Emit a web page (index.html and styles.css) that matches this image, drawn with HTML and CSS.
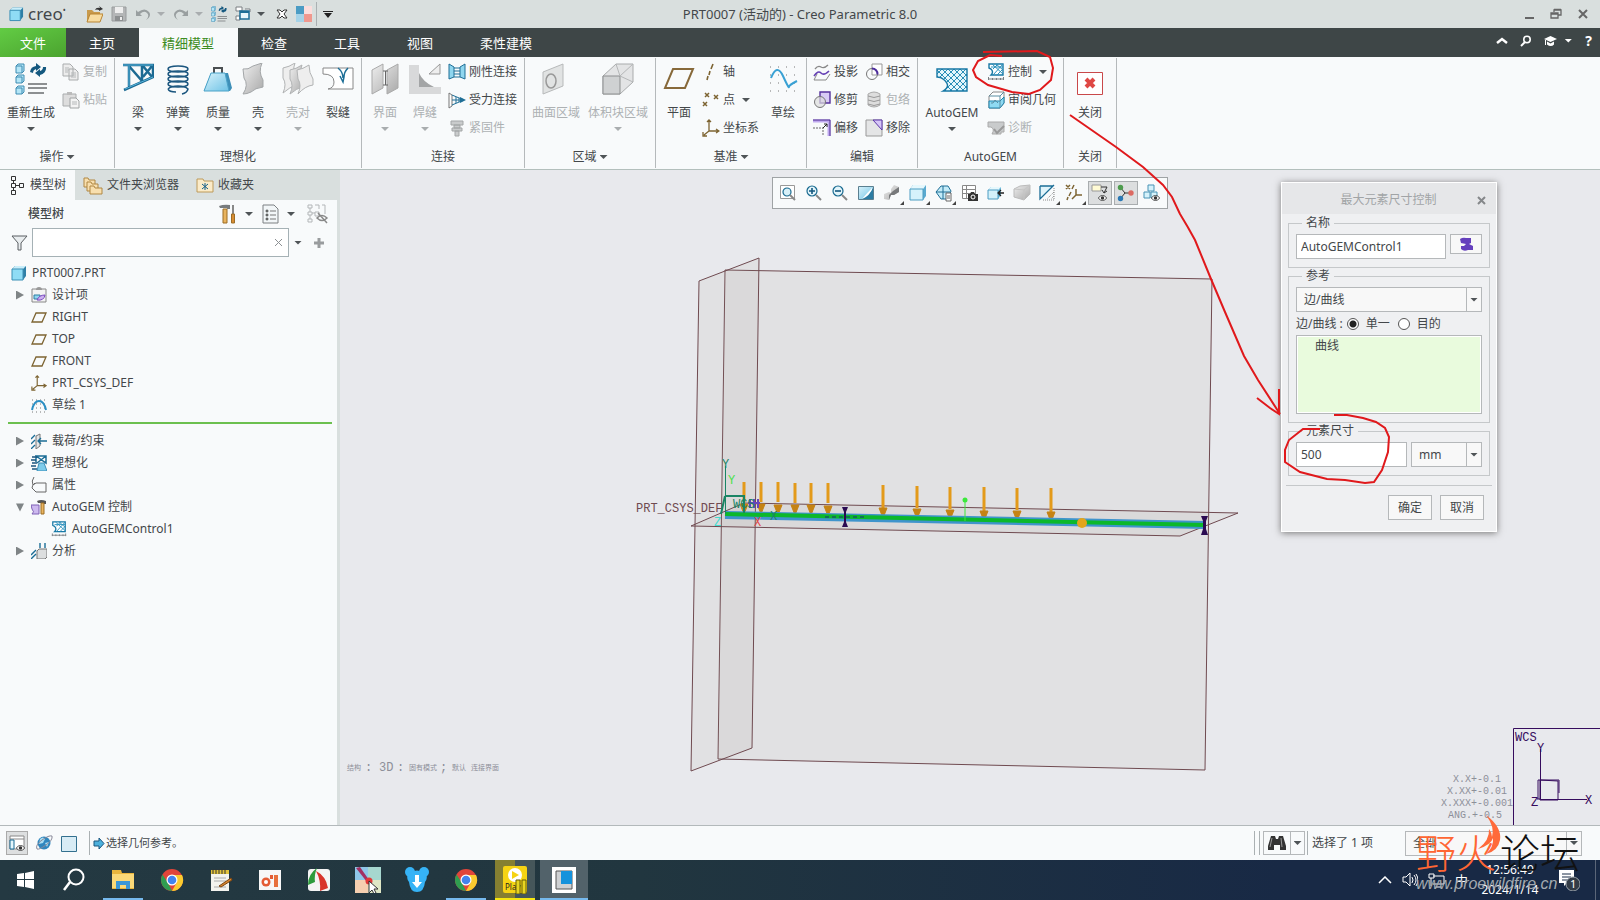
FILE: index.html
```
<!DOCTYPE html>
<html lang="zh-CN">
<head>
  <meta charset="UTF-8">
  <title>PRT0007 (活动的) - Creo Parametric 8.0</title>
  <link rel="stylesheet" href="styles.css">
</head>
<body>

<!-- shared icons -->
<svg class="sprite" aria-hidden="true">
  <defs>
    <linearGradient id="sky" x1="0" y1="0" x2="1" y2="1">
      <stop offset="0" stop-color="#d8f2fb"/><stop offset="1" stop-color="#6fc3e6"/>
    </linearGradient>
    <linearGradient id="metal" x1="0" y1="0" x2="1" y2="1">
      <stop offset="0" stop-color="#eeeeee"/><stop offset="1" stop-color="#a9a9a9"/>
    </linearGradient>
  </defs>
  <symbol id="i-cube" viewBox="0 0 16 16">
    <path d="M1 4l3-3h11v10l-3 4H1z" fill="#2f7fa6"/>
    <path d="M1 4l3-3h11l-3 3z" fill="#c9eefa"/>
    <path d="M1 4h11v11H1z" fill="#8fdcf5" stroke="#3b8fb5"/>
  </symbol>
  <symbol id="i-plane" viewBox="0 0 16 16">
    <path d="M5 4h10l-4 9H1z" fill="none" stroke="#7d6432" stroke-width="1.3"/>
  </symbol>
  <symbol id="i-csys" viewBox="0 0 18 18">
    <path d="M7 2v10h9M7 12l-5 4M5 3l2-2 2 2M14 10l3 2-3 2M1 13v4h4" fill="none" stroke="#7d6432" stroke-width="1.3"/>
  </symbol>
  <symbol id="i-regen" viewBox="0 0 32 32">
    <g fill="#b5e6f7" stroke="#3f8cb2"><path d="M1 3l2-2h6v7l-2 2H1zM1 14l2-2h6v6l-2 2H1zM1 25l2-2h6v6l-2 2H1z"/><path d="M1 3h6v7M1 14h6v6M1 25h6v6" fill="none"/></g>
    <path d="M15 9a7 7 0 0 1 6-6V0l5 4-5 4V6q-3 1-3 4zM31 4a7 7 0 0 1-6 8v2l-5-4 5-4v2q3-1 3-4z" fill="#14587f"/>
    <path d="M13 21h19M13 25h19M13 30h16" stroke="#8c8f91" stroke-width="2"/>
  </symbol>
  <symbol id="i-mesh" viewBox="0 0 18 18">
    <path d="M2 1h14v11H4q3-3 0-6l-2-1z" fill="#fff" stroke="#1778a5" stroke-width="1.4"/>
    <path d="M5 1l11 10M9 1l7 6M16 1L6 12M11 1L6 6M16 6l-6 6M4 4h12" stroke="#2b91bd" fill="none"/>
    <path d="M1 16h16M1.500 14v3M5.500 15v2M9.500 15v2M13.500 15v2M16.500 14v3" stroke="#7b7f82" fill="none"/>
  </symbol>
  <symbol id="i-chrome" viewBox="0 0 24 24">
    <circle cx="12" cy="12" r="11" fill="#e1453a"/>
    <path d="M2.500 6.500L8 15l4 8A11 11 0 0 1 2.500 6.500z" fill="#2f9e50"/>
    <path d="M12 7h10a11 11 0 0 1-10 16l5-9z" fill="#fbcb2f"/>
    <circle cx="12" cy="12" r="5.500" fill="#fff"/><circle cx="12" cy="12" r="4.300" fill="#4384ee"/>
  </symbol>
  <symbol id="i-eye" viewBox="0 0 10 7">
    <path d="M0 3.500q5-6 10 0-5 6-10 0z" fill="#fff" stroke="#333"/><circle cx="5" cy="3.500" r="2" fill="#333"/>
  </symbol>
</svg>

<header class="titlebar">
  <div class="quick">
    <svg class="q-cube" width="15" height="16"><use href="#i-cube"/></svg>
    <span class="brand">creo<sup>•</sup></span>
    <button title="打开"><svg width="17" height="17" viewBox="0 0 17 17"><path d="M1 15V4h5l2 2h6v9z" fill="#c89a4c"/><path d="M4 8h13l-3 8H1z" fill="#f8dca0" stroke="#b98532"/><path d="M9 4q1-3 5-2l-1-2 4 3-4 2v-1q-2-1-4 0z" fill="#333"/></svg></button>
    <button title="保存"><svg width="16" height="16" viewBox="0 0 16 16"><path d="M1 1h14v14H1z" fill="#b4b6b7" stroke="#999c9d"/><path d="M4 1h8v6H4z" fill="#eee"/><path d="M4 10h8v5H4z" fill="#8c8f90"/><path d="M9 11h2v3H9z" fill="#eee"/></svg></button>
    <button title="撤消"><svg width="16" height="14" viewBox="0 0 16 14"><path d="M1 3v6h6L5 7q4-4 7-1t-1 7q6-4 3-8-4-5-11 0z" fill="#999fa0"/></svg><i class="caret dim"></i></button>
    <button title="重做"><svg width="16" height="14" viewBox="0 0 16 14"><path d="M15 3v6H9l2-2Q7 3 4 6t1 7Q-1 9 2 5q4-5 11 0z" fill="#999fa0"/></svg><i class="caret dim"></i></button>
    <button title="重新生成"><svg width="16" height="16"><use href="#i-regen"/></svg></button>
    <button title="窗口"><svg width="16" height="16" viewBox="0 0 16 16"><path d="M1 1h6v4H1zM10 3h5v3M1 10h4v4H1z" fill="#fff" stroke="#7b7f82"/><path d="M5 5h9v8H5z" fill="#e6f6fc" stroke="#1b6d96" stroke-width="1.500"/><path d="M5 6h9" stroke="#1b6d96" stroke-width="2"/></svg><i class="caret"></i></button>
    <button title="关闭" class="close-window"><svg width="12" height="10" viewBox="0 0 12 10"><path d="M1 1h3l2 2 2-2h3L8 5l3 4H8L6 7 4 9H1l3-4z" fill="#fff" stroke="#333"/></svg></button>
    <button title="外观"><svg width="16" height="16" viewBox="0 0 16 16"><path d="M0 0h8v8H0z" fill="#4b9cc4"/><path d="M8 0h8v8H8z" fill="#fbdedd"/><path d="M0 8h8v8H0z" fill="#a5d3e8"/><path d="M8 8h8v8H8z" fill="#f0988e"/></svg></button>
    <span class="bar"></span>
    <button title="自定义"><svg width="10" height="7" viewBox="0 0 10 7"><path d="M0 0h10v1H0zM1 2h8L5 7z" fill="#222"/></svg></button>
  </div>
  <h1>PRT0007 (活动的) - Creo Parametric 8.0</h1>
  <div class="window-buttons">
    <button title="最小化"><svg width="12" height="12" viewBox="0 0 12 12"><path d="M2 9h9v2H2z" fill="#666"/></svg></button>
    <button title="还原"><svg width="12" height="12" viewBox="0 0 12 12"><path d="M4 4V2h7v5H8M4 1.500h7" fill="none" stroke="#666" stroke-width="1.300"/><path d="M1 5h7v5H1zM1 6h7" fill="none" stroke="#666" stroke-width="1.300"/></svg></button>
    <button title="关闭"><svg width="12" height="12" viewBox="0 0 12 12"><path d="M2 2l8 8M10 2l-8 8" stroke="#666" stroke-width="2"/></svg></button>
  </div>
</header>

<nav class="tabs">
  <button class="tab file">文件</button>
  <button class="tab">主页</button>
  <button class="tab active">精细模型</button>
  <button class="tab">检查</button>
  <button class="tab">工具</button>
  <button class="tab">视图</button>
  <button class="tab">柔性建模</button>
  <div class="tab-help">
    <svg width="12" height="8" viewBox="0 0 12 8"><path d="M1 6l5-4 5 4" fill="none" stroke="#fff" stroke-width="2.500"/></svg>
    <svg width="12" height="12" viewBox="0 0 12 12"><circle cx="7" cy="4.500" r="3.200" fill="none" stroke="#fff" stroke-width="1.600"/><path d="M5 7l-4 4" stroke="#fff" stroke-width="2"/></svg>
    <svg width="13" height="10" viewBox="0 0 13 10"><path d="M0 3l6.500-3L13 3 6.500 6z" fill="#fff"/><path d="M3 5.500v3q4 3 7 0v-3L6.500 7.500zM1 4h1v5H1z" fill="#fff"/></svg>
    <i class="caret white"></i>
    <b>?</b>
  </div>
</nav>

<section class="ribbon">
  <div class="group g-ops">
    <div class="tools">
      <button class="big wide"><svg width="32" height="32"><use href="#i-regen"/></svg><span>重新生成</span><i class="caret"></i></button>
      <div class="col">
        <button class="small" disabled><svg viewBox="0 0 18 18"><path d="M1 1h7l3 3v9H1zM7 6h6l3 3v8H7z" fill="#ececec" stroke="#a9acad"/><path d="M3 5h4M3 7h4M3 9h3M9 10h5M9 12h5M9 14h5" stroke="#b5b8b9"/></svg>复制</button>
        <button class="small" disabled><svg viewBox="0 0 18 18"><path d="M1 3h13v12H1z" fill="#ddd" stroke="#a9acad"/><path d="M5 1h5v3H5z" fill="#bbb"/><path d="M8 7h6l3 3v7H8z" fill="#f3f3f3" stroke="#a0a3a4"/><path d="M10 11h5M10 13h5" stroke="#b5b8b9"/></svg>粘贴</button>
      </div>
    </div>
    <div class="group-name">操作<i class="caret"></i></div>
  </div>

  <div class="group g-ideal">
    <div class="tools">
      <button class="big"><svg width="32" height="32" viewBox="0 0 32 32"><path d="M1 2h30v12L2 27M7 2v22M7 3l13 15M20 2v17M21 14l9-11M21 3l9 11" fill="none" stroke="#1c6a93" stroke-width="2.500"/><path d="M1 2h30M7 3v20M31 14L3 26" stroke="#59b5dc"/></svg><span>梁</span><i class="caret"></i></button>
      <button class="big"><svg width="32" height="32" viewBox="0 0 32 32"><g fill="none" stroke="#1b567f" stroke-width="1.500"><ellipse cx="16" cy="6" rx="10" ry="3"/><ellipse cx="16" cy="11" rx="10" ry="3"/><ellipse cx="16" cy="16" rx="10" ry="3"/><ellipse cx="16" cy="21" rx="10" ry="3"/><path d="M6 26q3-3 10-3t10 3q-1 4-6 5M6 26q1 3 8 3"/></g></svg><span>弹簧</span><i class="caret"></i></button>
      <button class="big"><svg width="32" height="32" viewBox="0 0 32 32"><path d="M12 10V5h8v5" fill="none" stroke="#4b4f52" stroke-width="2"/><path d="M9 10h17l4 15-2 3H2z" fill="#3d8fb8"/><path d="M9 10h14l4 18H2z" fill="url(#sky)" stroke="#4ba2c8"/></svg><span>质量</span><i class="caret"></i></button>
      <button class="big"><svg width="32" height="32" viewBox="0 0 32 32"><path d="M1 6q5 1 10-3l9-3q-4 9 1 17v7q-8 1-12 5-4 2-8 2 6-9 1-16z" fill="url(#metal)" stroke="#a3a6a8"/></svg><span>壳</span><i class="caret"></i></button>
      <button class="big" disabled><svg width="32" height="32" viewBox="0 0 32 32"><g fill="url(#metal)" stroke="#b1b3b4"><path d="M1 5q6-1 12-5-3 8 1 14v8q-6 2-13 8 4-9 0-15z" fill="#eee"/><path d="M8 7q6-1 12-5-3 8 1 14v8q-6 1-13 7 4-9 0-15z"/><path d="M15 7q6-1 12-5 0 8 4 14v6q-8 1-15 9 4-9 0-15z" fill="#eee"/></g></svg><span>壳对</span><i class="caret"></i></button>
      <button class="big"><svg width="32" height="32" viewBox="0 0 32 32"><path d="M1 11V5h30v21H6q6-1 6-7 0-8-11-8z" fill="#fff" stroke="#888"/><path d="M16 5q5 4 5 10M26 5q-4 4-4 9l-1 5-3-6" fill="none" stroke="#1b6d96" stroke-width="1.500"/></svg><span>裂缝</span></button>
    </div>
    <div class="group-name">理想化</div>
  </div>

  <div class="group g-conn">
    <div class="tools">
      <button class="big" disabled><svg width="32" height="32" viewBox="0 0 32 32"><path d="M3 7l11-6v24L3 31zM18 7l11-6v24l-11 6z" fill="url(#metal)" stroke="#aaa"/><path d="M14 8h5M16.500 8v14M14 22h5" stroke="#666"/></svg><span>界面</span><i class="caret"></i></button>
      <button class="big" disabled><svg width="32" height="32" viewBox="0 0 32 32"><path d="M0 2h10v22h22v7H0z" fill="#d8d9da"/><path d="M10 10q4 9 15 14H10z" fill="#a3a5a6"/><path d="M20 11L31 1v10z" fill="#eee" stroke="#999"/></svg><span>焊缝</span><i class="caret"></i></button>
      <div class="col">
        <button class="small"><svg viewBox="0 0 18 18"><path d="M1 1l5 3v10l-5 2zM17 1l-5 3v10l5 2z" fill="#8fd6ef" stroke="#1f6e96"/><path d="M6 5h6M6 8h6M6 11h6M6 14h6" stroke="#1f6e96"/></svg>刚性连接</button>
        <button class="small"><svg viewBox="0 0 18 18"><path d="M1 2v15l3-2V4z" fill="#fff" stroke="#777"/><path d="M4 4l12 5M4 14l12-5M4 9h12M8 6v6M11 7v4" fill="none" stroke="#1f6e96"/><path d="M12 6l6 3-6 3z" fill="#1f6e96"/></svg>受力连接</button>
        <button class="small" disabled><svg viewBox="0 0 18 18"><path d="M3 2h12v4H3zM6 6h6v3H6zM4 9h10v3H4zM7 12h4v5H7z" fill="#c9cbcc" stroke="#a3a6a7"/></svg>紧固件</button>
      </div>
    </div>
    <div class="group-name">连接</div>
  </div>

  <div class="group g-region">
    <div class="tools">
      <button class="big wide" disabled><svg width="32" height="32" viewBox="0 0 32 32"><path d="M3 9l20-8v22L3 31z" fill="#e1e3e3" stroke="#b7b9ba"/><ellipse cx="11" cy="18" rx="5" ry="7" fill="none" stroke="#999" stroke-width="1.500"/></svg><span>曲面区域</span></button>
      <button class="big wide" disabled><svg width="32" height="32" viewBox="0 0 32 32"><path d="M1 13L14 1h17v18L18 31H1z" fill="#e3e4e5" stroke="#a9abac"/><path d="M1 13h17v18H1z" fill="#cfd1d2" stroke="#8d8f90"/><path d="M18 13L31 1M14 1l4 12 13 6" stroke="#b5b7b8" fill="none"/></svg><span>体积块区域</span><i class="caret"></i></button>
    </div>
    <div class="group-name">区域<i class="caret"></i></div>
  </div>

  <div class="group g-datum">
    <div class="tools">
      <button class="big"><svg width="32" height="32" viewBox="0 0 32 32"><path d="M10 6h20l-8 19H2z" fill="none" stroke="#87693a" stroke-width="2"/></svg><span>平面</span></button>
      <div class="col">
        <button class="small"><svg viewBox="0 0 18 18"><path d="M11 1L9 6M8 8l-1 4M6 13l-1 4" stroke="#7d6432" stroke-width="1.600"/></svg>轴</button>
        <button class="small"><svg viewBox="0 0 18 18"><path d="M3 2l4 4M7 2L3 6M12 4l4 4M16 4l-4 4M1 11l4 4M5 11l-4 4" stroke="#7d6432" stroke-width="1.500"/></svg>点<i class="caret"></i></button>
        <button class="small"><svg viewBox="0 0 18 18"><use href="#i-csys"/></svg>坐标系</button>
      </div>
      <button class="big"><svg width="32" height="32" viewBox="0 0 32 32"><path d="M3 4h26M3 12h26M3 20h26M3 28h26" stroke="#777" stroke-dasharray="1 7"/><path d="M4 15q6-15 12-2t6 11 8-6" fill="none" stroke="#39a1d4" stroke-width="2"/></svg><span>草绘</span></button>
    </div>
    <div class="group-name">基准<i class="caret"></i></div>
  </div>

  <div class="group g-edit">
    <div class="tools">
      <div class="col">
        <button class="small"><svg viewBox="0 0 18 18"><path d="M2 6q3-4 6-2t7-2" fill="none" stroke="#888" stroke-width="1.300"/><path d="M4 11l-3 6h12l4-6" fill="none" stroke="#888"/><path d="M1 13q4-6 7-3t8-2" fill="none" stroke="#6541b5" stroke-width="1.600"/></svg>投影</button>
        <button class="small"><svg viewBox="0 0 18 18"><path d="M7 1h10v11H7z" fill="#d9ccf5" stroke="#55319c" stroke-width="1.400"/><circle cx="7" cy="11" r="5.500" fill="#ddd" fill-opacity=".7" stroke="#777"/></svg>修剪</button>
        <button class="small"><svg viewBox="0 0 18 18"><path d="M0 2h16v15" fill="none" stroke="#c0a9ef" stroke-width="3"/><path d="M0 1h17v16" fill="none" stroke="#4a288f"/><path d="M0 9h10v8" fill="none" stroke="#666" stroke-dasharray="2 1"/><path d="M10 9l4-4M11 5h3v3" fill="none" stroke="#222"/></svg>偏移</button>
      </div>
      <div class="col">
        <button class="small"><svg viewBox="0 0 18 18"><path d="M7 1h10v11H7z" fill="#fff" stroke="#999"/><circle cx="7" cy="11" r="5.500" fill="none" stroke="#777"/><path d="M7 5.500a5.500 5.500 0 0 1 5.500 6" fill="none" stroke="#4d2d9c" stroke-width="2"/></svg>相交</button>
        <button class="small" disabled><svg viewBox="0 0 18 18"><path d="M3 3q6-4 12 0v11q-6 4-12 0z" fill="#ddd" stroke="#aaa"/><path d="M3 5q6 3 12 0M3 9q6 3 12 0M3 13q6 3 12 0" fill="none" stroke="#999"/></svg>包络</button>
        <button class="small"><svg viewBox="0 0 18 18"><path d="M1 1h16v16H1z" fill="#e4e5e6" stroke="#999"/><path d="M8 1h9v10z" fill="#d6c6f7" stroke="#5b35a8"/></svg>移除</button>
      </div>
    </div>
    <div class="group-name">编辑</div>
  </div>

  <div class="group g-gem">
    <div class="tools">
      <button class="big wide"><svg width="32" height="32" viewBox="0 0 32 32"><defs><pattern id="hex" width="6" height="6" patternUnits="userSpaceOnUse"><path d="M0 0l6 6M6 0L0 6" stroke="#2b8fb8"/></pattern></defs><path d="M1 6h30v22H7q9-5 0-12-2-2-6-2z" fill="#e5f6fc"/><path d="M1 6h30v22H7q9-5 0-12-2-2-6-2z" fill="url(#hex)" stroke="#1778a5" stroke-width="1.400"/></svg><span>AutoGEM</span><i class="caret"></i></button>
      <div class="col">
        <button class="small"><svg viewBox="0 0 18 18"><use href="#i-mesh"/></svg>控制<i class="caret"></i></button>
        <button class="small"><svg viewBox="0 0 18 18"><path d="M2 5l4-4h11v11l-4 5H2z" fill="#fff" stroke="#888"/><path d="M2 10h11l4-4v6l-4 5H2z" fill="#8fdaf2" stroke="#1f83ad"/><path d="M2 5h11v12M13 5l4-4M4 12h2l2-3 3 3" fill="none" stroke="#5b8ea3"/></svg>审阅几何</button>
        <button class="small" disabled><svg viewBox="0 0 18 18"><path d="M1 3h16v10h-3v2H5q3-5-1-7H1z" fill="#c9cbcc" stroke="#aaa"/><path d="M7 10l3 4 7-7" fill="none" stroke="#999" stroke-width="2"/></svg>诊断</button>
      </div>
    </div>
    <div class="group-name">AutoGEM</div>
  </div>

  <div class="group g-close">
    <div class="tools">
      <button class="big"><svg width="32" height="32" viewBox="0 0 32 32"><path d="M3.500 9.500h25v22h-25z" fill="#fff" stroke="#c9484a"/><path d="M12 16l8 8M20 16l-8 8" stroke="#df4744" stroke-width="4"/></svg><span>关闭</span></button>
    </div>
    <div class="group-name">关闭</div>
  </div>
</section>

<main class="workspace">
  <aside class="side">
    <div class="side-tabs">
      <button class="active"><svg width="14" height="20" viewBox="0 0 14 20"><path d="M1.500 1.500h4v4h-4zM1.500 8.500h4v4h-4zM1.500 15.500h4v4h-4zM9.500 8.500h4v4h-4zM3.500 5v3M3.500 12v3M6 10.500h3" fill="none" stroke="#333"/></svg>模型树</button>
      <button><svg width="20" height="19" viewBox="0 0 20 19"><g fill="#f8dfae" stroke="#b08742"><path d="M1 2h4l1 2h6v7H1z"/><path d="M4 6h4l1 2h6v7H4z"/><path d="M7 10h4l1 2h7v6H7z"/></g></svg>文件夹浏览器</button>
      <button><svg width="18" height="16" viewBox="0 0 18 16"><path d="M1 2h6l1 2h9v11H1z" fill="#fbebc8" stroke="#bd9a5b"/><path d="M9 6v7M6 7l6 5M12 7l-6 5" stroke="#17608a"/></svg>收藏夹</button>
    </div>

    <div class="side-head">
      <strong>模型树</strong>
      <button title="设置"><svg width="18" height="20" viewBox="0 0 18 20"><path d="M0 2q5-2 11-1v4H8V4H1z" fill="#777b7e"/><path d="M4 5h4v14H4z" fill="#e9b45f" stroke="#9b6c25"/><path d="M14 1v9" stroke="#888" stroke-width="2"/><path d="M12.500 10h3v9h-3z" fill="#d98d33" stroke="#9b6c25"/></svg><i class="caret"></i></button>
      <button title="显示"><svg width="17" height="20" viewBox="0 0 17 20"><path d="M1 1h11l4 4v14H1z" fill="#f2f6f8" stroke="#7c8083"/><circle cx="5" cy="7" r="1" fill="none" stroke="#333"/><circle cx="5" cy="11" r="1" fill="none" stroke="#333"/><circle cx="5" cy="15" r="1" fill="none" stroke="#333"/><path d="M8 7h6M8 11h6M8 15h6" stroke="#777"/></svg><i class="caret"></i></button>
      <button title="隐藏" class="hide-tree"><svg width="21" height="20" viewBox="0 0 21 20"><path d="M1 1h4v3H1zM1 8h4v3H1zM1 15h4v3H1zM8 8h4v4H8zM3 4v4M3 11v4M5 9h3M12 1v4M18 1v9M8 1h4M15 1h3" fill="none" stroke="#b3b6b8"/><path d="M10 14q5-5 10 0-5 5-10 0zM11 9l9 10" fill="none" stroke="#888" stroke-width="1.500"/></svg></button>
    </div>

    <div class="filter">
      <svg width="17" height="16" viewBox="0 0 17 16"><path d="M1 1h15l-6 7v7H7V8z" fill="#e9edef" stroke="#5b5f62"/></svg>
      <label class="filter-box">
        <input type="text" aria-label="筛选">
        <button title="清除"><svg width="9" height="9" viewBox="0 0 9 9"><path d="M1 1l7 7M8 1L1 8" stroke="#8c9093"/></svg></button>
      </label>
      <i class="caret"></i>
      <button title="添加"><svg width="12" height="12" viewBox="0 0 12 12"><path d="M6 1v10M1 6h10" stroke="#999c9e" stroke-width="3"/></svg></button>
    </div>

    <ul class="tree">
      <li class="root"><svg><use href="#i-cube"/></svg>PRT0007.PRT</li>
      <li><i class="twist"></i><svg viewBox="0 0 16 16"><path d="M1 2h14v13H1z" fill="#f3f3f3" stroke="#888"/><path d="M5 3q0-3 3-3t3 3z" fill="#999"/><path d="M3 8h6v4H3z" fill="#8fd6ef" stroke="#2d7da3"/><path d="M6 13q2-5 8-5-1 6-8 5z" fill="#cdb0f0" stroke="#7b4cc0"/></svg>设计项</li>
      <li><i></i><svg><use href="#i-plane"/></svg>RIGHT</li>
      <li><i></i><svg><use href="#i-plane"/></svg>TOP</li>
      <li><i></i><svg><use href="#i-plane"/></svg>FRONT</li>
      <li><i></i><svg><use href="#i-csys"/></svg>PRT_CSYS_DEF</li>
      <li><i></i><svg viewBox="0 0 16 16"><path d="M1 3h15M1 7h15M1 11h15M1 15h15" stroke="#777" stroke-dasharray="1 3"/><path d="M1 13q2-9 7-9t7 9" fill="none" stroke="#2a8fc4" stroke-width="2"/></svg>草绘 1</li>
    </ul>
    <hr class="insert-line">
    <ul class="tree">
      <li><i class="twist"></i><svg viewBox="0 0 16 16"><path d="M5 3l4-2v12l-4 3z" fill="#e3e5e6" stroke="#777"/><path d="M16 8H7M10 5L7 8l3 3M0 6l4-4M0 11l4-4M0 16l4-4" fill="none" stroke="#1b6d96" stroke-width="1.300"/></svg>载荷/约束</li>
      <li><i class="twist"></i><svg viewBox="0 0 16 16"><path d="M5 1h10v7L5 1v6M15 1L6 8" fill="#fff" stroke="#1b6d96" stroke-width="1.500"/><path d="M1 2h5M0 5h5M1 8h5M0 11h5M1 14h5" stroke="#1b567f" stroke-width="1.500"/><path d="M8 8h5l3 8H6z" fill="#7ccbeb" stroke="#3d8fb8"/></svg>理想化</li>
      <li><i class="twist"></i><svg viewBox="0 0 16 16"><path d="M3 0q-3 4-1 8l3-2h10v9H5l-4-4q0-3 3-5" fill="none" stroke="#666"/></svg>属性</li>
      <li><i class="twist open"></i><svg viewBox="0 0 16 16"><path d="M0 6h8v9H1q3-2 0-5z" fill="#cdb9ef" stroke="#7e60b5"/><path d="M6 2q4-2 9 0v3h-2V4H7z" fill="#555"/><path d="M10 4h3v11h-3z" fill="#e9b45f" stroke="#9b6c25"/></svg>AutoGEM 控制</li>
      <li class="deep"><i></i><svg><use href="#i-mesh"/></svg>AutoGEMControl1</li>
      <li><i class="twist"></i><svg viewBox="0 0 16 16"><path d="M6 8l2-2h8v8l-2 2H6z" fill="#dcdedf" stroke="#777"/><path d="M9 0v5M14 0v5M0 12l5-5M0 16l5-5" stroke="#1b6d96" stroke-width="1.400"/></svg>分析</li>
    </ul>
  </aside>

  <section class="view">
    <svg class="model" viewBox="340 170 1260 655">
      <g fill="#a08f80" fill-opacity=".09" stroke="#6f4a50">
        <path d="M725 270l487 9-7 491-487-11z"/>
        <path d="M699 281l60-23-7 490-61 23z"/>
        <path d="M691 526l53-23 494 10-58 23z"/>
      </g>
      <text class="vec brown" x="636" y="512">PRT_CSYS_DEF</text>

      <g class="load">
        <path d="M744 482v20M761 482v20M778 482v20M795 483v20M811 483v20M828 483v20M883 485v24M917 486v22M950 487v22M984 487v24M1017 488v22M1051 488v24"/>
        <path class="head" d="M740 504h8l-4 10zM757 504h8l-4 10zM774 505h8l-4 10zM791 505h8l-4 10zM807 505h8l-4 10zM824 506h8l-4 10zM879 508h8l-4 10zM913 509h8l-4 10zM946 510h8l-4 10zM980 511h8l-4 10zM1013 511h8l-4 10zM1047 512h8l-4 10z"/>
      </g>

      <path d="M725 515l480 10" stroke="#3f94cc" stroke-width="8"/>
      <path d="M725 514l480 11" stroke="#0cb82b" stroke-width="4"/>
      <path d="M825 517h40" stroke="#152f7c" stroke-dasharray="4 3"/>
      <path d="M842 507h6l-2 5v10l2 5h-6l2-5v-10zM1201 516h7l-2 5v8l2 6h-7l2-6v-8z" fill="#2b0b52"/>
      <circle cx="1082" cy="523" r="5" fill="#e3a51b"/>
      <path d="M965 501v20" stroke="#3be83b"/><circle cx="965" cy="500" r="2.500" fill="#3be83b"/>
      <path d="M725.500 466v48" stroke="#1a8464"/>
      <path d="M725 496h19v17M721 514l4-18" fill="none" stroke="#1a8464" stroke-width="2"/>
      <path d="M748 503h12M750 499v9M754 499v9M758 499v9" stroke="#6945b8" stroke-width="2"/>
      <text class="vec teal" x="722" y="468">Y</text>
      <text class="vec teal" x="733" y="508">WCS</text>
      <text class="vec teal" x="770" y="520">X</text>
      <text class="vec lime" x="728" y="484">Y</text>
      <text class="vec red" x="754" y="526">X</text>
      <text class="vec cyan" x="714" y="526">Z</text>

      <g class="hint">
        <text x="347" y="770">结构</text><text x="409" y="770">固有模式</text>
        <text x="452" y="770">默认</text><text x="471" y="770">连接界面</text>
        <text class="vec" x="365" y="771">:</text><text class="vec" x="379" y="771">3D</text>
        <text class="vec" x="397" y="771">:</text><text class="vec" x="440" y="771">;</text>
      </g>
      <g class="tolerance">
        <text x="1477" y="782">X.X+-0.1</text>
        <text x="1477" y="794">X.XX+-0.01</text>
        <text x="1477" y="806">X.XXX+-0.001</text>
        <text x="1475" y="818">ANG.+-0.5</text>
      </g>

      <path d="M1513.500 826v-97.500H1601" fill="none" stroke="#360c5e"/>
      <text class="vec wcs" x="1515" y="741">WCS</text>
      <path d="M1540.500 749v50.500H1587M1537 799h4M1540 780l18 1v19h-18zM1538 780h21v13M1538 780v19" fill="none" stroke="#360c5e"/>
      <text class="vec wcs" x="1537" y="752">Y</text>
      <text class="vec wcs" x="1585" y="804">X</text>
      <text class="vec wcs" x="1531" y="806">Z</text>
    </svg>

    <div class="view-tools">
      <button title="重新调整"><svg viewBox="0 0 18 18"><path d="M1.500 1.500h14v13h-14z" fill="#fff" stroke="#999"/><circle cx="8" cy="8" r="4" fill="#d8f0f8" stroke="#17698f" stroke-width="1.200"/><path d="M11 11l5 5" stroke="#888" stroke-width="2"/></svg></button>
      <button title="放大"><svg viewBox="0 0 18 18"><circle cx="7" cy="7" r="5" fill="#e2f4fa" stroke="#17698f" stroke-width="1.200"/><path d="M4 7h6M7 4v6" stroke="#14587f" stroke-width="1.600"/><path d="M11 11l5 5" stroke="#888" stroke-width="2"/></svg></button>
      <button title="缩小"><svg viewBox="0 0 18 18"><circle cx="7" cy="7" r="5" fill="#e2f4fa" stroke="#17698f" stroke-width="1.200"/><path d="M4 7h6" stroke="#14587f" stroke-width="1.600"/><path d="M11 11l5 5" stroke="#888" stroke-width="2"/></svg></button>
      <button title="重画"><svg viewBox="0 0 18 18"><path d="M1.500 2.500h15v13h-15z" fill="url(#sky)" stroke="#5a7f90"/><path d="M16 3v12H5q8-4 11-12z" fill="#2c7ca3"/><path d="M16 3q-3 9-11 12 6-7 11-12z" fill="#fff"/></svg></button>
      <button title="渲染"><svg viewBox="0 0 18 18"><path d="M11 1l5 2v5l-5 3H8l-2 5-5-1v-5l5-2 2 1V5z" fill="url(#metal)"/><path d="M16 3v5l-5 3H8l-2 5v-5l4-4z" fill="#77797b"/></svg><i class="more"></i></button>
      <button title="显示样式"><svg viewBox="0 0 18 18"><path d="M1 5l3-4h13v11l-3 4H1z" fill="#5aaad0"/><path d="M1 5l3-4h13l-3 4z" fill="#e6f8fd"/><path d="M1 5h13v11H1z" fill="#d5f2fb" stroke="#4c9dc2"/></svg><i class="more"></i></button>
      <button title="已保存方向"><svg viewBox="0 0 18 18"><path d="M1 8l5-6h7l3 5-3 8H6z" fill="#c3ebf8" stroke="#1f6e96"/><path d="M1 8h14M8 2v13" stroke="#1f6e96"/><path d="M11 9h5v8h-5z" fill="#fff" stroke="#666"/><path d="M12 12h3M12 14h3" stroke="#666"/></svg><i class="more"></i></button>
      <button title="视图管理器"><svg viewBox="0 0 18 18"><path d="M1.500 1.500h13v13h-13zM1 5.500h13M1 9.500h13M5.500 1v14" fill="#fff" stroke="#888"/><path d="M7 10h2l1-2h3l1 2h3v7H7z" fill="#333"/><circle cx="12" cy="13" r="2" fill="none" stroke="#fff"/></svg></button>
      <button title="外观"><svg viewBox="0 0 18 18"><path d="M1 6l3-3h10v8l-3 4H1z" fill="#6ab8da"/><path d="M1 6l3-3h10l-3 3z" fill="#e6f8fd"/><path d="M1 6h10v9H1z" fill="#d3f1fa" stroke="#4c9dc2"/><path d="M12 9h5M14 6l-3 3 3 3" fill="none" stroke="#222" stroke-width="1.300"/></svg></button>
      <button title="透视图"><svg viewBox="0 0 18 18"><path d="M1 5l6-3 10-1v9l-6 6-10-3z" fill="url(#metal)" stroke="#bbb"/><path d="M1 5l10 1 6-5M11 6v10" fill="none" stroke="#c5c5c5"/></svg></button>
      <button title="截面"><svg viewBox="0 0 18 18"><path d="M1 2h13L1 15z" fill="#e0f4fb"/><path d="M1 2h13M1 2v13L15 1" fill="none" stroke="#1b6d96" stroke-width="1.300"/><path d="M15 4v12H4M15 8l-7 7M15 12l-3 3" fill="none" stroke="#888" stroke-dasharray="1 1"/></svg><i class="more"></i></button>
      <button title="基准显示"><svg viewBox="0 0 18 18"><path d="M1 1l4 4M5 1L1 5M9 1L7 5M6 8l-2 4M3 13l-1 3M11 5v6h6M11 11l-4 4" fill="none" stroke="#7d6432" stroke-width="1.500"/></svg><i class="more"></i></button>
      <button title="注释显示" class="on"><svg viewBox="0 0 18 18"><path d="M1 1h9v6H1z" fill="#fffbd5" stroke="#999"/><path d="M10 3h6l-3 6M11 6l2 3 3-2" fill="none" stroke="#333"/><use href="#i-eye" x="7" y="11" width="9" height="6"/></svg></button>
      <button title="旋转中心" class="on"><svg viewBox="0 0 18 18"><path d="M3 3l5 6h6M8 9l-5 6" fill="none" stroke="#333"/><circle cx="3.500" cy="3.500" r="2.700" fill="#4e9c4e"/><circle cx="14" cy="9" r="2.700" fill="#dc6a62"/><circle cx="3.500" cy="14.500" r="2.700" fill="#2b79b5"/></svg></button>
      <button title="模拟显示"><svg viewBox="0 0 18 18"><path d="M5 1h6v6H5zM1 8h6v6H1zM8 8h6v6H8z" fill="#d5f2fb" stroke="#4993b5"/><use href="#i-eye" x="8" y="11" width="9" height="6"/></svg></button>
    </div>

    <form class="dialog">
      <div class="dialog-title"><span>最大元素尺寸控制</span><button type="button" title="关闭"><svg width="9" height="9" viewBox="0 0 9 9"><path d="M1 1l7 7M8 1L1 8" stroke="#85888a" stroke-width="2"/></svg></button></div>
      <fieldset>
        <legend>名称</legend>
        <div class="row">
          <input type="text" value="AutoGEMControl1" aria-label="名称">
          <button type="button" class="color" title="颜色"><svg width="14" height="14" viewBox="0 0 14 14"><path d="M1 2q3-2 6-1h5v5l-2 1 4 2v4H9q-4 2-7-1V9h3l2-2-5-1z" fill="#6540bd"/></svg></button>
        </div>
      </fieldset>
      <fieldset>
        <legend>参考</legend>
        <div class="combo"><select aria-label="参考类型"><option>边/曲线</option></select><span><i class="caret"></i></span></div>
        <div class="radios">
          <span>边/曲线 :</span>
          <label><input type="radio" name="mode" checked>单一</label>
          <label><input type="radio" name="mode">目的</label>
        </div>
        <div class="picked">曲线</div>
      </fieldset>
      <fieldset>
        <legend>元素尺寸</legend>
        <div class="row">
          <input type="text" value="500" aria-label="元素尺寸">
          <div class="combo unit"><select aria-label="单位"><option>mm</option></select><span><i class="caret"></i></span></div>
        </div>
      </fieldset>
      <div class="dialog-buttons">
        <button type="button">确定</button>
        <button type="button">取消</button>
      </div>
    </form>
  </section>
</main>

<footer class="status">
  <button class="pressed" title="导航区"><svg width="16" height="18" viewBox="0 0 16 18"><path d="M1 2h14v13H1zM1 5h14" fill="#fff" stroke="#888"/><path d="M1 6h4v9H1z" fill="#e4f6fc" stroke="#1b6d96"/><use href="#i-eye" x="7" y="11" width="9" height="6"/></svg></button>
  <button title="浏览器"><svg width="17" height="18" viewBox="0 0 17 18"><circle cx="8" cy="9" r="6.500" fill="#2f87bf"/><path d="M4 5q3-3 5 0l-2 4-4 1zM9 9l4-1-2 5z" fill="#a8dcf2"/><path d="M1 15Q-1 11 6 6t10-4q1 4-6 9t-9 4z" fill="none" stroke="#889"/></svg></button>
  <button title="全屏"><svg width="16" height="17" viewBox="0 0 16 17"><path d="M.500 1.500h15v15h-15z" fill="#d8ecf5" stroke="#33708f"/></svg></button>
  <span class="bar"></span>
  <p><svg width="12" height="13" viewBox="0 0 12 13"><path d="M1 4h5V1l5 5.500L6 12V9H1z" fill="#4cb0dc" stroke="#1b567f"/></svg>选择几何参考。</p>
  <div class="status-right">
    <span class="bar"></span>
    <button class="find" title="查找"><span><svg width="18" height="16" viewBox="0 0 18 16"><path d="M3 1h4l1 3h2l1-3h4l3 10v4h-6v-5H6v5H0v-4z" fill="#333"/><path d="M4 3L2 12M13 3l1 9" stroke="#999"/></svg></span><span><i class="caret"></i></span></button>
    <span class="bar"></span>
    <span class="count">选择了 1 项</span>
    <div class="combo scope"><select aria-label="选择过滤器"><option>全部</option></select><span><i class="caret"></i></span></div>
  </div>
</footer>

<footer class="taskbar">
  <button title="开始"><svg width="17" height="18" viewBox="0 0 17 18"><path d="M0 3l7-1v6H0zM8 2l9-2v8H8zM0 9h7v7l-7-1zM8 9h9v9l-9-2z" fill="#fff"/></svg></button>
  <button title="搜索"><svg width="24" height="24" viewBox="0 0 24 24"><circle cx="14" cy="9" r="7.500" fill="none" stroke="#fff" stroke-width="2"/><path d="M8 14l-6 8" stroke="#fff" stroke-width="2.500"/></svg></button>
  <button title="资源管理器" class="run"><svg width="24" height="22" viewBox="0 0 24 22"><path d="M1 1h9l1 3h12v16H1z" fill="#eab63d"/><path d="M1 5h22v14H1z" fill="#fbd978"/><path d="M5 20v-8h14v8h-4v-4H9v4z" fill="#3a97d8"/></svg></button>
  <button title="Chrome"><svg width="24" height="24"><use href="#i-chrome"/></svg></button>
  <button title="记事本"><svg width="24" height="24" viewBox="0 0 24 24"><path d="M2 2h18v21H2z" fill="#f3f3ee"/><path d="M2 2h18v4H2z" fill="#e2c33c"/><path d="M4 1v5M7 1v5M10 1v5M13 1v5M16 1v5" stroke="#333"/><path d="M5 10h12M5 13h12M5 19h12" stroke="#aaa"/><path d="M10 18l12-8 1 2-11 7z" fill="#d9862d" stroke="#7a4513"/></svg></button>
  <button title="录屏"><svg width="22" height="22" viewBox="0 0 22 22"><path d="M0 1h22v20H0z" fill="#f7f7f7"/><path d="M15 6h4v12h-4z" fill="#e7703d"/><circle cx="7" cy="13" r="4.500" fill="#e45c35"/><circle cx="7" cy="13" r="2" fill="#fff"/><path d="M11 6h3v4h-3z" fill="#e45c35"/></svg></button>
  <button title="FastStone"><svg width="24" height="24" viewBox="0 0 24 24"><rect x="1" y="1" width="22" height="22" rx="3" fill="#f4f4f4"/><path d="M10 0Q1 6 1 17l7-3q-1-7 2-14z" fill="#2d9b3c"/><path d="M9 3q10 5 12 17l-8 3q1-11-4-20z" fill="#d8342b"/></svg></button>
  <button title="画图"><svg width="26" height="26" viewBox="0 0 26 26"><path d="M0 0h26v26H0z" fill="#a6d7cf"/><path d="M0 0h13v13H0z" fill="#8fc6e8"/><path d="M0 13h13v13H0z" fill="#f6cfb0"/><path d="M13 13h13v13H13z" fill="#dfe7c5"/><path d="M1 1l4-1 9 13-2 2z" fill="#a32f62"/><circle cx="14" cy="14" r="3.500" fill="#e23838"/><path d="M14 14v12l3-3 2 4 2-1-2-4h4z" fill="#fff" stroke="#333"/></svg></button>
  <button title="下载"><svg width="24" height="26" viewBox="0 0 24 26"><circle cx="5" cy="5" r="5" fill="#36b3f6"/><circle cx="19" cy="5" r="5" fill="#36b3f6"/><path d="M3 6q9-5 18 0 2 6-1 9-1 10-8 10T4 15Q1 12 3 6z" fill="#36b3f6"/><path d="M10 8h4v7h3l-5 6-5-6h3z" fill="#fff"/></svg></button>
  <button title="Chrome" class="run"><svg width="24" height="24"><use href="#i-chrome"/></svg></button>
  <button title="Player" class="run player"><svg width="26" height="28" viewBox="0 0 26 28"><rect x="1" y="0" width="24" height="27" rx="2" fill="#f6d313"/><circle cx="13" cy="9" r="7" fill="#fff"/><path d="M10 5l7 4-7 4z" fill="#f6d313"/><text x="3" y="24" font-size="8" fill="#222">Play</text><path d="M14 14h4v14h-4zM20 14h4v14h-4z" fill="#e8d521" stroke="#665d0a"/></svg></button>
  <button title="Creo" class="run current"><svg width="24" height="26" viewBox="0 0 24 26"><path d="M0 0h24v26H0z" fill="#fff"/><path d="M4 4h16v18H4z" fill="#cfd1d3" stroke="#555"/><path d="M9 4h11v13H9z" fill="#1592dc"/></svg></button>

  <div class="tray">
    <svg width="14" height="8" viewBox="0 0 14 8"><path d="M1 7l6-6 6 6" fill="none" stroke="#fff" stroke-width="1.500"/></svg>
    <svg width="16" height="16" viewBox="0 0 16 16"><path d="M1 5h3l4-4v13l-4-4H1zM10 5q2 3 0 6M12 3q4 5 0 10M14 2q4 6 0 12" fill="none" stroke="#fff"/></svg>
    <svg width="17" height="15" viewBox="0 0 17 15"><path d="M5 3h11v8H5M8 14h5M1 1h5v4H1zM3 5v8" fill="none" stroke="#fff"/></svg>
    <span class="ime">中</span>
    <time>12:56:49<br>2024/1/14</time>
    <svg width="22" height="22" viewBox="0 0 22 22"><path d="M1 1h15v13H9l-3 3v-3H1z" fill="#fff"/><path d="M4 5h9M4 8h9M4 11h6" stroke="#1b2d47"/><circle cx="15" cy="15" r="7" fill="#333c47" stroke="#98a0a8"/><text x="12" y="19" font-size="11" fill="#fff">1</text></svg>
  </div>
</footer>

<div class="watermark">
  <div class="mark"><span>野火</span><svg width="26" height="40" viewBox="0 0 26 40"><path d="M8 0q16 12 14 25-2 11-14 14 8-7 7-16Q13 30 0 34q12-9 11-20 3 4 3 8Q17 12 8 0z" fill="#ff6a3a"/></svg><span class="dark">论坛</span></div>
  <div class="site">www.proewildfire.cn</div>
</div>

<!-- hand-drawn notes -->
<svg class="notes" viewBox="0 0 1600 900">
  <path d="M983 52l54-1 13 6 3 11-2 12-11 10-11 4-17-2-24-7-12-8-3-7 5-9 12-6 12 1"/>
  <path d="M1070 115l46 32 27 20 20 18 9 12 8 17q8 13 15 26l16 39 14 33 19 44 14 24 22 34M1257 398l13 10 9 6v-25"/>
  <path d="M1334 415h13l16 3 13 4 9 6 4 9-1 15-6 18-8 12-9 1-20-3-18-1-27-7-15-10v-12l4-10 14-11h17"/>
</svg>

</body>
</html>
```

FILE: styles.css
```
* {
  box-sizing: border-box;
}

body {
  margin: 0;
  min-height: 100vh;
  display: flex;
  flex-direction: column;
  position: relative;
  overflow: hidden;
  background: #f8fafb;
  color: #43474a;
  font-family: "Noto Sans", "Noto Sans CJK SC", sans-serif;
  font-size: 12px;
  line-height: 18px;
}

button {
  padding: 0;
  border: 0;
  background: none;
  color: inherit;
  font: inherit;
  display: flex;
  align-items: center;
}

input,
select {
  font: inherit;
  color: inherit;
}

svg {
  display: block;
  flex: none;
}

.sprite {
  position: absolute;
  width: 0;
  height: 0;
}

.caret {
  flex: none;
  width: 8px;
  height: 4px;
  background: #4f5457;
  clip-path: polygon(0 0, 100% 0, 50% 100%);
}

.caret.dim,
:disabled .caret {
  background: #a9adaf;
}

.bar {
  width: 1px;
  height: 24px;
  background: #aab0b2;
}

/* title bar */

.titlebar {
  height: 28px;
  display: grid;
  grid-template-columns: 1fr auto 1fr;
  align-items: center;
  background: #d9dfde;
}

.titlebar h1 {
  margin: 0;
  font-size: 13px;
  font-weight: normal;
}

.quick {
  display: flex;
  align-items: center;
  gap: 8px;
  padding-left: 9px;
}

.quick button {
  gap: 6px;
}

.quick .close-window {
  margin-left: 3px;
}

.quick .bar {
  margin: 0 -2px 0 -4px;
}

.brand {
  width: 50px;
  margin-left: -4px;
  font-size: 17px;
}

.brand sup {
  font-size: 8px;
  line-height: 1px;
}

.window-buttons {
  display: flex;
  justify-content: flex-end;
  gap: 15px;
  padding-right: 11px;
}

/* ribbon tabs */

.tabs {
  height: 29px;
  display: flex;
  background: #3e4647;
}

.tab {
  padding: 0 24px 0 23px;
  color: #fff;
  font-size: 13px;
}

.tab.file {
  padding: 0 20px;
  background: linear-gradient(160deg, #62cc44, #4ba32f);
}

.tab.active {
  background: #f8fafb;
  color: #3c8c22;
}

.tab-help {
  margin-left: auto;
  padding: 0 8px 4px 0;
  display: flex;
  align-items: center;
  gap: 12px;
  color: #fff;
  font-size: 14px;
}

.tab-help .caret {
  margin: 0 1px 0 -5px;
  background: #fff;
}

/* ribbon */

.ribbon {
  height: 113px;
  display: flex;
  border-bottom: 1px solid #b3bfbc;
}

.group {
  display: flex;
  flex-direction: column;
  margin: 1px 0;
  border-right: 1px solid #b5b9bb;
}

.g-ops { width: 115px; }
.g-ideal { width: 247px; }
.g-conn { width: 163px; }
.g-region { width: 131px; }
.g-datum { width: 151px; }
.g-edit { width: 111px; }
.g-gem { width: 146px; }
.g-close { width: 53px; }

.tools {
  flex: 1;
  display: flex;
  align-items: flex-start;
  padding-left: 3px;
}

.g-ops .tools,
.g-region .tools {
  padding-left: 0;
}

.g-edit .tools,
.g-close .tools {
  padding-left: 6px;
}

.big {
  width: 40px;
  padding-top: 5px;
  flex-direction: column;
  white-space: nowrap;
}

.big.wide {
  width: 62px;
}

.big span {
  margin: 9px 0 5px;
}

.col {
  display: flex;
  flex-direction: column;
}

.big:not(.wide) + .col {
  padding-left: 3px;
}

.g-gem .col {
  padding-left: 4px;
}

.col + .col {
  padding-left: 7px;
}

.col + .big {
  margin-left: 4px;
}

.small {
  height: 28px;
  gap: 3px;
  white-space: nowrap;
}

.small svg {
  width: 18px;
  height: 18px;
}

.small .caret {
  margin-left: 4px;
}

.ribbon button:disabled {
  color: #adb1b3;
}

.group-name {
  height: 22px;
  display: flex;
  justify-content: center;
  align-items: center;
  gap: 3px;
}

/* model tree */

.workspace {
  flex: 1;
  display: flex;
}

.side {
  width: 340px;
  flex: none;
  border-right: 3px solid #d9dfde;
}

.side-tabs {
  height: 30px;
  display: flex;
  background: #d9dfde;
}

.side-tabs button {
  gap: 4px;
  padding: 0 9px 0 8px;
}

.side-tabs .active {
  gap: 6px;
  padding: 0 9px 0 10px;
  background: #f8fafb;
}

.side-head {
  height: 28px;
  display: flex;
  align-items: center;
  padding: 0 9px 0 28px;
}

.side-head strong {
  flex: 1;
  font-weight: 500;
}

.side-head button {
  gap: 8px;
  margin-right: 9px;
}

.side-head .hide-tree {
  margin: 0 0 0 3px;
}

.filter {
  display: flex;
  align-items: center;
  padding: 0 12px 0 11px;
}

.filter-box {
  flex: 1;
  height: 29px;
  display: flex;
  margin: 0 5px 0 4px;
  padding-right: 5px;
  border: 1px solid #a5b1b5;
  background: #fff;
}

.filter-box input {
  flex: 1;
  width: 0;
  border: 0;
  outline: 0;
}

.filter > button {
  margin-left: 11px;
}

.tree {
  margin: 0;
  padding: 5px 0 6px 11px;
  list-style: none;
}

.tree li {
  height: 22px;
  display: flex;
  align-items: center;
}

.tree svg {
  width: 16px;
  height: 16px;
  margin-right: 5px;
}

.tree i {
  width: 20px;
  height: 9px;
}

.tree .deep {
  padding-left: 20px;
}

.tree .twist::before {
  content: "";
  display: block;
  width: 8px;
  height: 9px;
  margin-left: 5px;
  background: #7f8486;
  clip-path: polygon(0 0, 100% 50%, 0 100%);
}

.tree .twist.open::before {
  clip-path: polygon(0 10%, 100% 10%, 50% 100%);
}

.insert-line {
  height: 2px;
  margin: 0 5px 1px 8px;
  border: 0;
  background: #6cc04f;
}

/* graphics view */

.view {
  flex: 1;
  position: relative;
  background: #e8e9ed;
}

.model {
  position: absolute;
  width: 100%;
  height: 100%;
}

.vec {
  font-family: "Liberation Mono", monospace;
  font-size: 12px;
}

.brown { fill: #6f4a50; }
.teal { fill: #1a8464; }
.lime { fill: #4be04b; }
.red { fill: #e04848; }
.cyan { fill: #42dccf; }
.wcs { fill: #360c5e; }

.load {
  fill: none;
  stroke: #e39a1a;
  stroke-width: 3;
}

.load .head {
  fill: #c58314;
  stroke: #c58314;
  stroke-width: 1;
}

.hint {
  fill: #8d8f99;
  font-size: 7px;
}

.tolerance {
  fill: #8d8f99;
  font-family: "Liberation Mono", monospace;
  font-size: 10px;
  text-anchor: middle;
}

.view-tools {
  position: relative;
  width: max-content;
  margin: 7px auto 0;
  padding: 3px;
  display: flex;
  gap: 2px;
  border: 1px solid #9fa3a5;
  background: #f8fafb;
}

.view-tools button {
  position: relative;
  width: 24px;
  height: 24px;
  justify-content: center;
}

.view-tools svg {
  width: 18px;
  height: 18px;
}

.view-tools .on {
  border: 1px solid #a9adaf;
  background: #dcdedf;
}

.more {
  position: absolute;
  right: 0;
  bottom: 0;
  width: 4px;
  height: 4px;
  background: #444;
  clip-path: polygon(100% 0, 100% 100%, 0 100%);
}

/* dialog */

.dialog {
  position: absolute;
  top: 12px;
  right: 103px;
  width: 216px;
  height: 350px;
  padding: 0 6px;
  border: 1px solid #fff;
  background: #eff0f2;
  box-shadow: 0 1px 7px #777;
}

.dialog-title {
  height: 31px;
  display: flex;
  align-items: center;
  margin: 0 -6px;
  padding: 3px 10px 0 18px;
  background: #e6e7e9;
  color: #a1a4a6;
}

.dialog-title span {
  flex: 1;
  text-align: center;
}

.dialog fieldset {
  min-width: 0;
  margin: 0 0 -1px;
  padding: 2px 7px 8px;
  border: 1px solid #c5c8ca;
}

.dialog legend {
  margin-left: 6px;
  padding: 0 4px;
}

.row {
  display: flex;
  align-items: flex-start;
  gap: 4px;
}

.row input {
  flex: 1;
  width: 0;
  height: 25px;
  padding: 0 4px;
  border: 1px solid #b5b8ba;
  background: #fff;
}

.color {
  width: 32px;
  height: 20px;
  justify-content: center;
  border: 1px solid #b5b8ba;
  background: #f8f8f8;
}

.combo {
  height: 25px;
  display: flex;
  border: 1px solid #b5b8ba;
  background: #f8f8f8;
}

.combo select {
  flex: 1;
  min-width: 0;
  padding: 0 7px;
  border: 0;
  appearance: none;
  background: none;
}

.combo span {
  width: 15px;
  display: flex;
  justify-content: center;
  align-items: center;
  border-left: 1px solid #b5b8ba;
}

.unit {
  width: 71px;
}

.radios {
  height: 23px;
  display: flex;
  align-items: center;
}

.radios label {
  display: flex;
  align-items: center;
  margin-right: 8px;
}

.radios input {
  appearance: none;
  width: 12px;
  height: 12px;
  margin: 0 7px 0 4px;
  border: 1px solid #555;
  border-radius: 50%;
  background: #fff;
}

.radios label + label input {
  margin-left: 0;
}

.radios input:checked {
  background: radial-gradient(#222 3px, #fff 4px);
}

.picked {
  height: 79px;
  padding: 1px 18px;
  border: 1px solid #b5b8ba;
  outline: 1px solid #fff;
  outline-offset: -2px;
  background: #e9fbdd;
}

.dialog-buttons {
  display: flex;
  justify-content: flex-end;
  gap: 8px;
  margin: 10px -2px 0;
  padding: 9px 8px 0 0;
  border-top: 1px solid #c5c8ca;
}

.dialog-buttons button {
  width: 44px;
  height: 25px;
  justify-content: center;
  border: 1px solid #b5b8ba;
  background: #f8f8f8;
}

/* status bar */

.status {
  height: 35px;
  display: flex;
  align-items: center;
  padding: 0 18px 0 6px;
  gap: 8px;
  border-top: 1px solid #b3b9bb;
}

.status .pressed {
  width: 22px;
  height: 24px;
  justify-content: center;
  border: 1px solid #aaa;
  background: #dddfe0;
}

.status > .bar {
  margin-left: 4px;
}

.status p {
  display: flex;
  align-items: center;
  gap: 1px;
  margin: 0 0 0 -5px;
  font-size: 11px;
}

.status-right {
  display: flex;
  align-items: center;
  margin-left: auto;
  gap: 2px;
}

.status-right > .bar:first-child {
  width: 6px;
  margin-right: 1px;
  border: 1px solid #aab0b2;
  border-width: 0 1px;
  background: none;
}

.find {
  width: 42px;
  height: 24px;
  border: 1px solid #b5b8ba;
}

.find span {
  height: 22px;
  flex: 1;
  display: flex;
  justify-content: center;
  align-items: center;
}

.find span:first-child {
  flex: 2;
  border-right: 1px solid #b5b8ba;
}

.count {
  width: 93px;
  padding-left: 2px;
}

.scope {
  width: 177px;
}

/* taskbar */

.taskbar {
  height: 40px;
  display: flex;
  gap: 1px;
  padding: 0 4px 0 1px;
  background: linear-gradient(90deg, #243942 0, #21363f 40%, #182945 80%, #182945);
  color: #fff;
}

.taskbar > button {
  width: 48px;
  justify-content: center;
}

.taskbar .run {
  background: linear-gradient(#76b9ed, #76b9ed) 50% 100% / 40px 2px no-repeat;
}

.taskbar .player {
  background: linear-gradient(#f5e60f, #f5e60f) 50% 100% / 40px 2px no-repeat, linear-gradient(90deg, #857f31 20px, #45565a 20px) 50% 0 / 40px 38px no-repeat;
}

.taskbar .current {
  background: linear-gradient(#76b9ed, #76b9ed) 0 100% / 48px 2px no-repeat, #52626a;
}

.tray {
  display: flex;
  align-items: center;
  margin-left: auto;
  padding-right: 15px;
  gap: 10px;
  border-right: 1px solid #5b6678;
}

.ime {
  font-size: 13px;
}

.tray time {
  width: 64px;
  line-height: 20px;
  text-align: center;
}

.tray time + svg {
  margin-left: 6px;
}

/* overlays */

.watermark {
  position: absolute;
  right: 16px;
  bottom: 7px;
  width: 168px;
  pointer-events: none;
}

.mark {
  display: flex;
  align-items: flex-end;
  color: #ff6633;
  font-size: 40px;
  font-weight: 300;
  line-height: 44px;
}

.mark svg {
  margin: 0 -4px 20px -18px;
}

.mark .dark {
  color: #111;
}

.site {
  color: #a3a9b0;
  font-family: "Liberation Sans", sans-serif;
  font-size: 16px;
  font-style: italic;
}

.notes {
  position: absolute;
  inset: 0;
  width: 100%;
  pointer-events: none;
  fill: none;
  stroke: #e0191c;
  stroke-width: 2;
}
```
